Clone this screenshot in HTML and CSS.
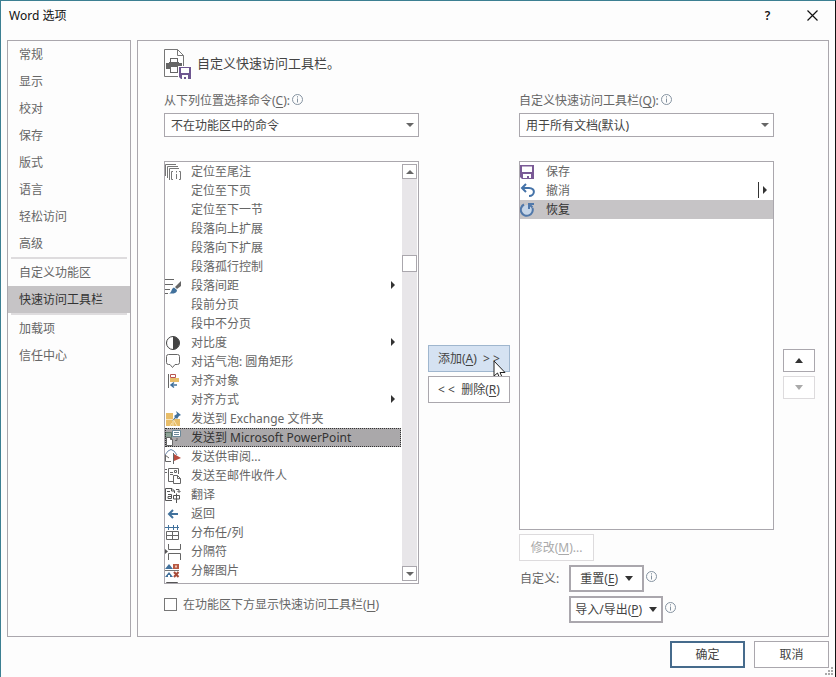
FILE: index.html
```html
<!DOCTYPE html>
<html lang="zh-CN">
<head>
    <meta charset="UTF-8">
    <title>Word 选项</title>
    <link rel="stylesheet" href="styles.css">
</head>
<body>
<div class="dialog">
    <header class="titlebar">
        <h1 class="title">Word 选项</h1>
        <button class="sysbtn" type="button">?</button>
        <button class="sysbtn" type="button" aria-label="关闭">
            <svg width="11" height="11" viewBox="0 0 11 11"><path d="M0.5 0.5l10 10M10.5 0.5l-10 10" stroke="#111" stroke-width="1.2"/></svg>
        </button>
    </header>

    <div class="body">
        <nav class="nav">
            <a class="nav-item" href="#">常规</a>
            <a class="nav-item" href="#">显示</a>
            <a class="nav-item" href="#">校对</a>
            <a class="nav-item" href="#">保存</a>
            <a class="nav-item" href="#">版式</a>
            <a class="nav-item" href="#">语言</a>
            <a class="nav-item" href="#">轻松访问</a>
            <a class="nav-item" href="#">高级</a>
            <hr class="nav-line">
            <a class="nav-item" href="#">自定义功能区</a>
            <a class="nav-item active" href="#">快速访问工具栏</a>
            <hr class="nav-line">
            <a class="nav-item" href="#">加载项</a>
            <a class="nav-item" href="#">信任中心</a>
        </nav>

        <main class="panel">
            <div class="heading">
                <svg width="28" height="31" viewBox="0 0 28 31" fill="none">
                    <path d="M0.5 0.5h13l6 6v21h-19z" fill="#fff" stroke="#777"/>
                    <path d="M13.5 0.5v6h6" stroke="#777"/>
                    <path d="M2 14h3v-1h10v1h3v6H2z" fill="#666"/>
                    <rect x="6.500" y="9.500" width="7" height="4" fill="#fff" stroke="#666"/>
                    <rect x="6.500" y="17.500" width="7" height="6" fill="#fff" stroke="#666"/>
                    <path d="M14 17h14v14H14z" fill="#fff"/>
                    <path d="M15 18h12v12H17l-2-2z" fill="#6f5791"/>
                    <path d="M17 19h8v5h-8zM18 26h6v4h-2v-2h-2v2h-2z" fill="#fff"/>
                </svg>
                <h2 class="heading-text">自定义快速访问工具栏。</h2>
            </div>

            <div class="grid">
                <div class="field">
                    <div class="label-row">
                        <label for="source">从下列位置选择命令(<u>C</u>):</label>
                        <svg class="info" viewBox="0 0 11 11"><circle cx="5.500" cy="5.500" r="5"/><path d="M5.500 2.200v1.300M5.500 4.500v4"/></svg>
                    </div>
                    <div class="select-wrap">
                        <select class="select" id="source"><option>不在功能区中的命令</option></select>
                    </div>
                </div>
                <div class="field field-right">
                    <div class="label-row">
                        <label for="target">自定义快速访问工具栏(<u>Q</u>):</label>
                        <svg class="info" viewBox="0 0 11 11"><circle cx="5.500" cy="5.500" r="5"/><path d="M5.500 2.200v1.300M5.500 4.500v4"/></svg>
                    </div>
                    <div class="select-wrap">
                        <select class="select" id="target"><option>用于所有文档(默认)</option></select>
                    </div>
                </div>

                <div class="left">
                    <div class="listbox commands">
                        <ul class="list">
                            <li class="row"><svg class="icon" viewBox="0 0 16 16" fill="none" stroke="#777"><path d="M0.500 12V0.500H11M2.500 14V2.500H13M4.500 16V4.500H14M8 7.500H6.500v8H8M14 7.500h1.500v8H14M11.500 7v1.500M11.500 10v5"/></svg>定位至尾注</li>
                            <li class="row"><span class="icon"></span>定位至下页</li>
                            <li class="row"><span class="icon"></span>定位至下一节</li>
                            <li class="row"><span class="icon"></span>段落向上扩展</li>
                            <li class="row"><span class="icon"></span>段落向下扩展</li>
                            <li class="row"><span class="icon"></span>段落孤行控制</li>
                            <li class="row sub"><svg class="icon" viewBox="0 0 16 16" fill="none"><path d="M0 1.500h9M0 6.500h8M0 11.500h5M0 15.500h3" stroke="#666"/><path d="M16 3v5l-4 3-2-2z" fill="#666"/><path d="M9 9.500l3 2.500c0 3-3 4-8 3.500 3-1 2-5 5-6z" fill="#41719c"/></svg>段落间距</li>
                            <li class="row"><span class="icon"></span>段前分页</li>
                            <li class="row"><span class="icon"></span>段中不分页</li>
                            <li class="row sub"><svg class="icon" viewBox="0 0 16 16"><circle cx="8" cy="8" r="6.500" fill="#fff" stroke="#444"/><path d="M8 1.500a6.500 6.500 0 0 1 0 13z" fill="#444"/></svg>对比度</li>
                            <li class="row"><svg class="icon" viewBox="0 0 16 16"><path d="M3.500 0.500h9q2 0 2 2v6q0 2-2 2H10l-2.500 3-2.500-3H3.500q-2 0-2-2v-6q0-2 2-2z" fill="#fff" stroke="#666"/></svg>对话气泡: 圆角矩形</li>
                            <li class="row"><svg class="icon" viewBox="0 0 16 16" fill="none"><path d="M3.500 1v14" stroke="#666"/><path d="M5.500 1.500h5v3h-5z" stroke="#b85450"/><path d="M5 5h9v4H5z" fill="#e8bd68"/><path d="M12 12H6M9 9.500L6 12l3 2.500" stroke="#41719c" stroke-width="1.500"/></svg>对齐对象</li>
                            <li class="row sub"><span class="icon"></span>对齐方式</li>
                            <li class="row"><svg class="icon" viewBox="0 0 16 16"><path d="M1 2h7v6h7v7H1z" fill="#e8bd68"/><path d="M1 8.500h7v6.500M8 8l4 7M5 15l2-3" stroke="#f8e4b8" fill="none"/><path d="M11 0l5 4-2 1-2 3-1-1-4 3 3-4-1-1 3-2z" fill="#41719c"/></svg>发送到 Exchange 文件夹</li>
                            <li class="row selected"><svg class="icon" viewBox="0 0 16 16"><path d="M0.500 2.500h6v5h-6z" fill="#8fa398" stroke="#5e7768"/><path d="M7.500 0.500h8v6h-8z" fill="#fff" stroke="#6b8898"/><path d="M9 2.500h5M9 4.500h5" stroke="#6b8898"/><path d="M1.500 7.500h4l2 2v6h-6z" fill="#fff" stroke="#666"/><path d="M5.500 7.500v2h2M10 10.500h2V8" fill="none" stroke="#666"/></svg>发送到 Microsoft PowerPoint</li>
                            <li class="row"><svg class="icon" viewBox="0 0 16 16" fill="none"><path d="M0 6l3-4q3-3 6 0l3 4" stroke="#6e87a8"/><path d="M0.500 6v6.500H6M0 6l4 3" stroke="#666"/><path d="M8.500 4v11" stroke="#666"/><path d="M9 5l7 4-7 3z" fill="#b84b3e"/></svg>发送供审阅...</li>
                            <li class="row"><svg class="icon" viewBox="0 0 16 16" fill="none" stroke="#666"><path d="M0 1.500h2M0 4.500h2M3.500 9V0.500h10V6M9.500 2.500h2v2h-2zM5 4.500h3M5 6.500h3M3.500 9v4.500H8"/><path d="M8.500 7.500h4l3 3v5h-7z" fill="#fff"/><path d="M12.500 7.500v3h3"/></svg>发送至邮件收件人</li>
                            <li class="row"><svg class="icon" viewBox="0 0 16 16" fill="none" stroke="#555"><path d="M7 13.500H0.500v-12H7l2.500 2.500V6M6.500 1.500V4h3M2 4.500h3M3 7.500h3.500v4H3v-2h3.500M8.500 8.500h6v3.500h-6zM11.500 6.500V16M11 2.500h3V5M12.500 4L14 5.500 15.500 4"/></svg>翻译</li>
                            <li class="row"><svg class="icon" viewBox="0 0 16 16" fill="none" stroke="#41719c" stroke-width="2"><path d="M4 8h9M8 4L4 8l4 4"/></svg>返回</li>
                            <li class="row"><svg class="icon" viewBox="0 0 16 16" fill="none"><path d="M0 2.500h14M3.500 0v5M8.500 0v5M12.500 0v5" stroke="#41719c"/><path d="M1.500 6.500h12v8h-12zM7.500 6.500v8M1.500 10.500h12" stroke="#666"/></svg>分布任/列</li>
                            <li class="row"><svg class="icon" viewBox="0 0 16 16" fill="none" stroke="#666"><path d="M3.500 0v5.500h12V0M3.500 16V9.500h12V16"/><path d="M0 5l3 2.500L0 10z" fill="#555" stroke="none"/></svg>分隔符</li>
                            <li class="row"><svg class="icon" viewBox="0 0 16 16"><path d="M4 1l4 5H0zM4 9l4 5H5v-2H3v2H0z" fill="#41719c"/><path d="M8 1h6v5H8z" fill="#b85a44"/><path d="M10 2.500h2v2h-2z" fill="#eec6b8"/><path d="M9 9l4.500 5M13.500 9L9 14" stroke="#a84a38" stroke-width="2"/><path d="M0 7.500h14" stroke="#777"/></svg>分解图片</li>
                            <li class="row" aria-hidden="true"><svg class="icon" viewBox="0 0 16 16"><path d="M1.500 16V0.500h11V16" fill="none" stroke="#555"/></svg></li>
                        </ul>
                        <div class="scrollbar">
                            <button class="scroll-btn up" type="button" aria-label="向上滚动"></button>
                            <div class="thumb"></div>
                            <button class="scroll-btn down" type="button" aria-label="向下滚动"></button>
                        </div>
                    </div>
                    <label class="check"><input class="checkbox" type="checkbox"><span>在功能区下方显示快速访问工具栏(<u>H</u>)</span></label>
                </div>

                <div class="transfer">
                    <button class="btn hover" type="button"><span>添加(<u>A</u>)&nbsp; &gt; &gt;</span>
                        <svg class="cursor" width="14" height="21" viewBox="0 0 14 21"><path d="M1 1v15l3.500-3 2.500 6 2.500-1L7 12.500h5z" fill="#fff" stroke="#222"/></svg>
                    </button>
                    <button class="btn" type="button"><span>&lt; &lt;&nbsp; 删除(<u>R</u>)</span></button>
                </div>

                <div class="right">
                    <ul class="listbox toolbar-list">
                        <li class="row"><svg class="icon" viewBox="0 0 16 16"><path d="M0 1h14v14H2l-2-2z" fill="#7a5a96"/><path d="M2 2.500h10V8H2zM3 10h8v4H9v-2H7v2H3z" fill="#fff"/></svg>保存</li>
                        <li class="row split"><svg class="icon" viewBox="0 0 16 16" fill="none" stroke="#4472a8" stroke-width="2"><path d="M6 1L2 5l4 4M2 5h7c7 0 6 8 0 8"/></svg>撤消</li>
                        <li class="row current"><svg class="icon" viewBox="0 0 16 16" fill="none" stroke="#5078aa" stroke-width="2"><circle cx="7" cy="8" r="5" fill="#c5d5e8" stroke="none"/><path d="M4 2.500A6 6 0 1 0 12.500 6M14 2H9v5M9.500 2.500l3 3"/></svg>恢复</li>
                    </ul>
                    <button class="btn modify" type="button" disabled><span>修改(<u>M</u>)...</span></button>
                    <div class="custom">
                        <span class="custom-label">自定义:</span>
                        <div class="custom-buttons">
                            <div class="custom-row">
                                <button class="btn thick reset" type="button"><span>重置(<u>E</u>)</span><span class="caret"></span></button>
                                <svg class="info" viewBox="0 0 11 11"><circle cx="5.500" cy="5.500" r="5"/><path d="M5.500 2.200v1.300M5.500 4.500v4"/></svg>
                            </div>
                            <div class="custom-row">
                                <button class="btn thick" type="button"><span>导入/导出(<u>P</u>)</span><span class="caret"></span></button>
                                <svg class="info" viewBox="0 0 11 11"><circle cx="5.500" cy="5.500" r="5"/><path d="M5.500 2.200v1.300M5.500 4.500v4"/></svg>
                            </div>
                        </div>
                    </div>
                </div>

                <div class="order">
                    <button class="btn move" type="button" aria-label="上移"><span class="caret caret-up"></span></button>
                    <button class="btn move" type="button" aria-label="下移" disabled><span class="caret"></span></button>
                </div>
            </div>
        </main>
    </div>

    <footer class="footer">
        <button class="btn wide primary" type="button">确定</button>
        <button class="btn wide" type="button">取消</button>
    </footer>
    <svg class="grip" width="9" height="9" viewBox="0 0 9 9" fill="#aaa"><path d="M6 0h2v2H6zM3 3h2v2H3zM6 3h2v2H6zM0 6h2v2H0zM3 6h2v2H3zM6 6h2v2H6z"/></svg>
</div>
</body>
</html>
```

FILE: styles.css
```css
* {
    box-sizing: border-box;
}
body {
    margin: 0;
    font-family: "Noto Sans", "Noto Sans CJK SC", sans-serif;
    font-size: 12px;
    line-height: 19px;
    color: #666;
    background: #fff;
}
button,
select {
    font: inherit;
    color: #444;
}
svg {
    display: block;
    flex: none;
}
ul {
    margin: 0;
    padding: 0;
    list-style: none;
}
u {
    text-underline-offset: 2px;
}

/* window */
.dialog {
    position: relative;
    display: flex;
    flex-direction: column;
    min-height: 100vh;
    padding: 0 6px 9px;
    background: #fdfdfd;
    border-top: 1px solid #3c7f92;
    border-left: 1px solid #3c7f92;
    border-right: 1px solid #111;
}
.titlebar {
    display: flex;
    align-items: center;
    height: 29px;
    margin-bottom: 10px;
    padding-left: 2px;
}
.title {
    flex: 1;
    margin: 0;
    font-size: 12px;
    font-weight: normal;
    color: #111;
}
.sysbtn {
    display: flex;
    align-items: center;
    justify-content: center;
    width: 45px;
    height: 29px;
    padding: 0;
    border: 0;
    background: none;
    color: #111;
    font-weight: 600;
}
.sysbtn:last-child {
    margin-right: -6px;
}
.body {
    flex: 1;
    display: flex;
    gap: 6px;
}

/* categories */
.nav {
    width: 124px;
    flex: none;
    border: 1px solid #aaa7ad;
}
.nav-item {
    display: block;
    padding-left: 11px;
    line-height: 27px;
    color: #666;
    text-decoration: none;
}
.nav-item.active {
    background: #c6c4c6;
    color: #333;
}
.nav-line {
    height: 2px;
    margin: 0 3px;
    border: 0;
    background: #dedcde;
}

/* options page */
.panel {
    flex: 1;
    padding: 8px 13px 12px 26px;
    border: 1px solid #aaa7ad;
}
.heading {
    display: flex;
    align-items: flex-start;
    gap: 5px;
    margin-bottom: 11px;
}
.heading-text {
    margin: 0;
    font-size: 13px;
    line-height: 28px;
    font-weight: normal;
    color: #444;
}
.grid {
    display: grid;
    grid-template-columns: minmax(0, 1fr) 82px minmax(0, 1fr) 32px;
    column-gap: 9px;
    row-gap: 24px;
}
.field-right {
    grid-column: 3;
}
.label-row {
    display: flex;
    margin-bottom: 3px;
}
.info {
    width: 11px;
    height: 11px;
    margin: 3px 0 0 2px;
    fill: none;
    stroke: #8593a0;
}
.select-wrap {
    position: relative;
}
.select-wrap::after {
    content: "";
    position: absolute;
    top: 10px;
    right: 5px;
    border: 4px solid transparent;
    border-top-color: #666;
    border-bottom: 0;
    pointer-events: none;
}
.select {
    appearance: none;
    display: block;
    width: 100%;
    height: 24px;
    padding: 0 6px;
    border: 1px solid #aaa7ad;
    border-radius: 0;
    background: #fff;
}

/* lists */
.left {
    grid-column: 1;
}
.listbox {
    border: 1px solid #aaa7ad;
    background: #fff;
}
.commands {
    display: flex;
    gap: 1px;
    height: 423px;
    overflow: hidden;
}
.list {
    flex: 1;
}
.row {
    position: relative;
    display: flex;
    align-items: center;
    gap: 10px;
    height: 19px;
    white-space: nowrap;
}
.icon {
    width: 16px;
    height: 16px;
    flex: none;
}
.row.selected {
    background: #aaa8aa;
    color: #333;
    outline: 1px dotted #333;
    outline-offset: -1px;
}
.row.current {
    background: #c6c4c6;
    color: #333;
}
.sub::after,
.split::after {
    content: "";
    position: absolute;
    top: 5px;
    right: 6px;
    border: 4px solid transparent;
    border-left: 4px solid #333;
    border-right: 0;
}
.split::before {
    content: "";
    position: absolute;
    top: 1px;
    right: 14px;
    width: 1px;
    height: 16px;
    background: #333;
}
.scrollbar {
    display: flex;
    flex-direction: column;
    width: 15px;
    margin: 2px 1px 2px 0;
    background: #e8e6e9;
}
.scroll-btn {
    display: flex;
    align-items: center;
    justify-content: center;
    height: 15px;
    padding: 0;
    border: 1px solid #aaa7ad;
    background: #fff;
}
.scroll-btn::after {
    content: "";
    border: 4px solid transparent;
}
.up::after {
    border-bottom-color: #666;
    border-top: 0;
}
.down::after {
    border-top-color: #666;
    border-bottom: 0;
}
.thumb {
    height: 17px;
    margin-top: 76px;
    border: 1px solid #aaa7ad;
    background: #fff;
}
.down {
    margin-top: auto;
}
.check {
    display: flex;
    align-items: center;
    gap: 6px;
    margin-top: 11px;
}
.checkbox {
    appearance: none;
    width: 13px;
    height: 13px;
    margin: 0;
    border: 1px solid #777;
    background: #fff;
}

/* buttons */
.btn {
    position: relative;
    display: flex;
    align-items: center;
    justify-content: center;
    height: 27px;
    padding: 0;
    border: 1px solid #aaa7ad;
    background: #fff;
    white-space: nowrap;
}
.btn:disabled {
    border-color: #dddbdd;
    color: #aaa;
}
.btn.hover {
    border-color: #9fb6ce;
    background: #d5e2f2;
}
.cursor {
    position: absolute;
    top: 14px;
    left: 64px;
}
.transfer,
.order {
    display: flex;
    flex-direction: column;
    gap: 4px;
    padding-top: 184px;
}
.order {
    padding-top: 188px;
}
.move {
    height: 23px;
}
.caret {
    border: 4px solid transparent;
    border-top: 5px solid #333;
    border-bottom: 0;
}
.caret-up {
    border-top: 0;
    border-bottom: 5px solid #333;
}
.btn:disabled .caret {
    border-top-color: #aaa;
}
.toolbar-list {
    height: 369px;
}
.modify {
    width: 75px;
    margin: 4px 0;
}
.custom {
    display: flex;
    gap: 10px;
}
.custom-label {
    line-height: 27px;
    padding-left: 1px;
}
.custom-buttons {
    display: flex;
    flex-direction: column;
    gap: 4px;
}
.custom-row {
    display: flex;
}
.custom-row .info {
    margin-top: 6px;
}
.thick {
    gap: 7px;
    padding: 0 4px;
    border-width: 2px;
}
.reset {
    width: 75px;
}
.footer {
    display: flex;
    justify-content: flex-end;
    gap: 9px;
    margin-top: 4px;
}
.wide {
    width: 75px;
}
.primary {
    border: 2px solid #466b8c;
}
.grip {
    position: absolute;
    right: 1px;
    bottom: 1px;
}
```
